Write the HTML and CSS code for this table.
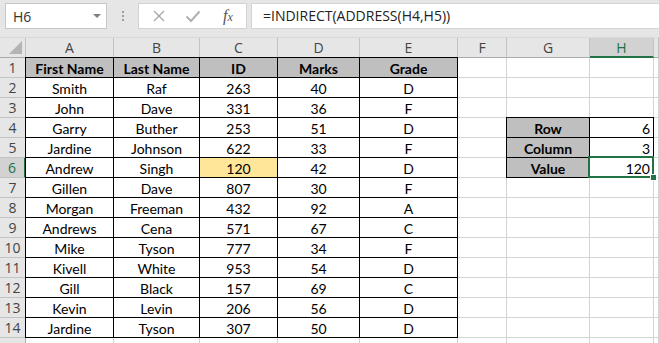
FILE: index.html
```html
<!DOCTYPE html>
<html lang="en">
<head>
  <meta charset="UTF-8">
  <meta name="viewport" content="width=device-width, initial-scale=1.0">
  <title>INDIRECT + ADDRESS</title>
  <link rel="stylesheet" href="styles.css">
</head>
<body>
  <!-- Name box and formula bar -->
  <div class="formula-bar">
    <div class="name-box">
      <span>H6</span>
      <span class="drop"></span>
    </div>
    <div class="grip"><i></i><i></i><i></i></div>
    <div class="fx-box">
      <svg class="ico" width="14" height="14" viewBox="0 0 14 14"><path d="M2 2 L12 12 M12 2 L2 12" stroke="#a8a8a8" stroke-width="1.4" fill="none"/></svg>
      <svg class="ico" width="16" height="14" viewBox="0 0 16 14"><path d="M1.5 7.5 L6 12 L14.5 2.5" stroke="#b0b0b0" stroke-width="2" fill="none"/></svg>
      <span class="fx">f<small>x</small></span>
    </div>
    <div class="formula">=INDIRECT(ADDRESS(H4,H5))</div>
  </div>

  <!-- Worksheet grid -->
  <div class="sheet">
    <div class="hd corner"><svg width="26" height="19" viewBox="0 0 26 19"><polygon points="9,16 22,16 22,3" fill="#b4b4b4"/></svg></div>
    <div class="hd">A</div><div class="hd">B</div><div class="hd">C</div><div class="hd">D</div><div class="hd">E</div><div class="hd">F</div><div class="hd">G</div><div class="hd on">H</div><div class="hd"></div>

    <div class="rh">1</div>
    <div class="c t th l tp">First Name</div><div class="c t th tp">Last Name</div><div class="c t th tp">ID</div><div class="c t th tp">Marks</div><div class="c t th tp">Grade</div>
    <div class="c"></div><div class="c"></div><div class="c"></div><div class="c"></div>

    <div class="rh">2</div>
    <div class="c t l">Smith</div><div class="c t">Raf</div><div class="c t">263</div><div class="c t">40</div><div class="c t">D</div>
    <div class="c"></div><div class="c"></div><div class="c"></div><div class="c"></div>

    <div class="rh">3</div>
    <div class="c t l">John</div><div class="c t">Dave</div><div class="c t">331</div><div class="c t">36</div><div class="c t">F</div>
    <div class="c"></div><div class="c"></div><div class="c"></div><div class="c"></div>

    <div class="rh">4</div>
    <div class="c t l">Garry</div><div class="c t">Buther</div><div class="c t">253</div><div class="c t">51</div><div class="c t">D</div>
    <div class="c"></div><div class="c t k l tp">Row</div><div class="c t v tp">6</div><div class="c"></div>

    <div class="rh">5</div>
    <div class="c t l">Jardine</div><div class="c t">Johnson</div><div class="c t">622</div><div class="c t">33</div><div class="c t">F</div>
    <div class="c"></div><div class="c t k l">Column</div><div class="c t v">3</div><div class="c"></div>

    <div class="rh sel">6</div>
    <div class="c t l">Andrew</div><div class="c t">Singh</div><div class="c t hit">120</div><div class="c t">42</div><div class="c t">D</div>
    <div class="c"></div><div class="c t k l">Value</div><div class="c t v active">120</div><div class="c"></div>

    <div class="rh">7</div>
    <div class="c t l">Gillen</div><div class="c t">Dave</div><div class="c t">807</div><div class="c t">30</div><div class="c t">F</div>
    <div class="c"></div><div class="c"></div><div class="c"></div><div class="c"></div>

    <div class="rh">8</div>
    <div class="c t l">Morgan</div><div class="c t">Freeman</div><div class="c t">432</div><div class="c t">92</div><div class="c t">A</div>
    <div class="c"></div><div class="c"></div><div class="c"></div><div class="c"></div>

    <div class="rh">9</div>
    <div class="c t l">Andrews</div><div class="c t">Cena</div><div class="c t">571</div><div class="c t">67</div><div class="c t">C</div>
    <div class="c"></div><div class="c"></div><div class="c"></div><div class="c"></div>

    <div class="rh">10</div>
    <div class="c t l">Mike</div><div class="c t">Tyson</div><div class="c t">777</div><div class="c t">34</div><div class="c t">F</div>
    <div class="c"></div><div class="c"></div><div class="c"></div><div class="c"></div>

    <div class="rh">11</div>
    <div class="c t l">Kivell</div><div class="c t">White</div><div class="c t">953</div><div class="c t">54</div><div class="c t">D</div>
    <div class="c"></div><div class="c"></div><div class="c"></div><div class="c"></div>

    <div class="rh">12</div>
    <div class="c t l">Gill</div><div class="c t">Black</div><div class="c t">157</div><div class="c t">69</div><div class="c t">C</div>
    <div class="c"></div><div class="c"></div><div class="c"></div><div class="c"></div>

    <div class="rh">13</div>
    <div class="c t l">Kevin</div><div class="c t">Levin</div><div class="c t">206</div><div class="c t">56</div><div class="c t">D</div>
    <div class="c"></div><div class="c"></div><div class="c"></div><div class="c"></div>

    <div class="rh">14</div>
    <div class="c t l">Jardine</div><div class="c t">Tyson</div><div class="c t">307</div><div class="c t">50</div><div class="c t">D</div>
    <div class="c"></div><div class="c"></div><div class="c"></div><div class="c"></div>

    <!-- row 15 runs off the bottom edge -->
    <div class="rh"></div>
    <div class="c"></div><div class="c"></div><div class="c"></div><div class="c"></div><div class="c"></div>
    <div class="c"></div><div class="c"></div><div class="c"></div><div class="c"></div>
  </div>
</body>
</html>
```
FILE: styles.css
```css
body {
  margin: 0;
  width: 659px;
  height: 343px;
  overflow: hidden;
  background-color: #fff;
  font-family: 'Open Sans', sans-serif;
}

/* Top strip: name box, grip, buttons, formula text */
.formula-bar {
  display: flex;
  height: 38px;
  padding: 3px 0 0 5px;
  box-sizing: border-box;
  background-color: #e6e6e6;
  border-bottom: 1px solid #d9d9d9;
}

.name-box {
  width: 102px;
  height: 26px;
  box-sizing: border-box;
  border: 1px solid #c6c6c6;
  background-color: #fff;
  display: flex;
  align-items: center;
  justify-content: space-between;
  padding: 0 5px 0 7px;
  font-size: 14px;
  color: #333;
}

.drop {
  width: 0;
  height: 0;
  border-left: 4px solid transparent;
  border-right: 4px solid transparent;
  border-top: 4px solid #808080;
}

.grip {
  width: 31px;
  display: flex;
  flex-direction: column;
  align-items: center;
  justify-content: center;
  gap: 2px;
  height: 26px;
}

.grip i {
  width: 2px;
  height: 2px;
  background-color: #a0a0a0;
}

.fx-box {
  width: 109px;
  height: 26px;
  box-sizing: border-box;
  border: 1px solid #d4d4d4;
  background-color: #fff;
  display: flex;
  align-items: center;
  padding-left: 13px;
}

.fx-box .ico {
  margin-right: 19px;
}

.fx-box .ico + .ico {
  margin-right: 22px;
}

.fx {
  font-family: 'Liberation Serif', serif;
  font-style: italic;
  font-size: 16px;
  color: #555;
}

.fx small {
  font-size: 12px;
}

.formula {
  flex: 1;
  height: 26px;
  margin-left: 4px;
  box-sizing: border-box;
  border: 1px solid #d4d4d4;
  border-right: none;
  background-color: #fff;
  padding-left: 11px;
  font-size: 14px;
  line-height: 24px;
  color: #222;
}

/* Worksheet */
.sheet {
  display: grid;
  grid-template-columns: 26px 88px 86px 78px 82px 98px 49px 83px 64px 1fr;
  grid-auto-rows: 20px;
}

.sheet > div {
  box-sizing: border-box;
  white-space: nowrap;
  overflow: visible;
}

.hd {
  background-color: #e6e6e6;
  border-right: 1px solid #c2c2c2;
  border-bottom: 1px solid #ababab;
  text-align: center;
  font-size: 14px;
  line-height: 19px;
  color: #444;
}

.hd.on {
  background-color: #d2d2d2;
  color: #217346;
  border-bottom: 2px solid #217346;
}

.corner svg {
  display: block;
}

.rh {
  background-color: #e6e6e6;
  border-right: 1px solid #ababab;
  border-bottom: 1px solid #c2c2c2;
  text-align: center;
  font-size: 14px;
  line-height: 20px;
  color: #444;
}

.rh.sel {
  background-color: #d2d2d2;
  color: #217346;
  border-right: 2px solid #217346;
}

.c {
  border-right: 1px solid #d4d4d4;
  border-bottom: 1px solid #d4d4d4;
  font-family: 'Lato', sans-serif;
  font-size: 14px;
  line-height: 21px;
  color: #000;
  text-align: center;
}

/* Bordered ranges */
.c.t {
  border-color: #000;
}

.c.l {
  box-shadow: -1px 0 0 #000;
}

.c.tp {
  box-shadow: 0 -1px 0 #000;
}

.c.l.tp {
  box-shadow: -1px 0 0 #000, 0 -1px 0 #000, -1px -1px 0 #000;
}

.th,
.k {
  background-color: #bfbfbf;
  font-weight: bold;
}

.v {
  text-align: right;
  padding-right: 3px;
}

.hit {
  background-color: #ffe699;
}

/* Active cell frame with fill handle */
.active {
  position: relative;
  z-index: 1;
}

.active::before {
  content: "";
  position: absolute;
  top: -2px;
  left: -2px;
  right: -1px;
  bottom: -1px;
  border: 2px solid #217346;
}

.active::after {
  content: "";
  position: absolute;
  right: -4px;
  bottom: -4px;
  width: 5px;
  height: 5px;
  background-color: #217346;
  border: 1px solid #fff;
}
```
